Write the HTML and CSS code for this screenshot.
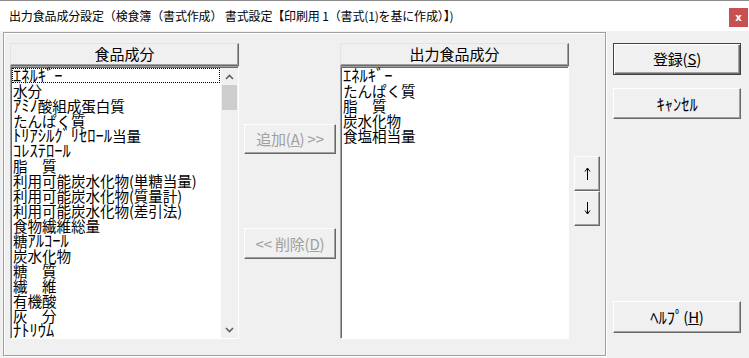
FILE: index.html
```html
<!DOCTYPE html>
<html lang="ja">
<head>
<meta charset="utf-8">
<title>出力食品成分設定</title>
<link rel="stylesheet" href="styles.css">
</head>
<body>
<div class="titlebar">
  <span class="title">出力食品成分設定（検食簿（書式作成） 書式設定【印刷用 1（書式(1)を基に作成）】)</span>
  <span class="close">x</span>
</div>
<div class="main">
  <div class="group">
    <div class="col">
      <div class="header">食品成分</div>
      <div class="list-outer">
        <div class="list">
          <div class="items">
            <div class="item focus"><span class="hk">ｴﾈﾙｷﾞｰ</span></div>
            <div class="item">水分</div>
            <div class="item"><span class="hk">ｱﾐﾉ</span>酸組成蛋白質</div>
            <div class="item">たんぱく質</div>
            <div class="item"><span class="hk">ﾄﾘｱｼﾙｸﾞﾘｾﾛｰﾙ</span>当量</div>
            <div class="item"><span class="hk">ｺﾚｽﾃﾛｰﾙ</span></div>
            <div class="item">脂　質</div>
            <div class="item">利用可能炭水化物(単糖当量)</div>
            <div class="item">利用可能炭水化物(質量計)</div>
            <div class="item">利用可能炭水化物(差引法)</div>
            <div class="item">食物繊維総量</div>
            <div class="item">糖<span class="hk">ｱﾙｺｰﾙ</span></div>
            <div class="item">炭水化物</div>
            <div class="item">糖　質</div>
            <div class="item">繊　維</div>
            <div class="item">有機酸</div>
            <div class="item">灰　分</div>
            <div class="item"><span class="hk">ﾅﾄﾘｳﾑ</span></div>
          </div>
          <div class="scrollbar">
            <div class="sb-arrow"><svg width="9" height="6" viewBox="0 0 9 6"><path d="M1 5L4.5 1.5L8 5" stroke="#606060" stroke-width="1.6" fill="none"/></svg></div>
            <div class="sb-thumb"></div>
            <div class="sb-track"></div>
            <div class="sb-arrow"><svg width="9" height="6" viewBox="0 0 9 6"><path d="M1 1L4.5 4.5L8 1" stroke="#606060" stroke-width="1.6" fill="none"/></svg></div>
          </div>
        </div>
      </div>
    </div>

    <div class="mid">
      <div class="btn disabled add">追加(<u>A</u>) &gt;&gt;</div>
      <div class="btn disabled del">&lt;&lt; 削除(<u>D</u>)</div>
    </div>

    <div class="col right">
      <div class="header">出力食品成分</div>
      <div class="list-outer">
        <div class="list">
          <div class="items">
            <div class="item"><span class="hk">ｴﾈﾙｷﾞｰ</span></div>
            <div class="item">たんぱく質</div>
            <div class="item">脂　質</div>
            <div class="item">炭水化物</div>
            <div class="item">食塩相当量</div>
          </div>
        </div>
      </div>
    </div>

    <div class="arrows">
      <div class="btn arrow up"><svg width="7" height="13" viewBox="0 0 7 13"><path d="M3.5 1.5V13M1 4.5L3.5 1L6 4.5" stroke="#000" stroke-width="1" fill="none"/></svg></div>
      <div class="btn arrow"><svg width="7" height="13" viewBox="0 0 7 13"><path d="M3.5 0V11.5M1 8.5L3.5 12L6 8.5" stroke="#000" stroke-width="1" fill="none"/></svg></div>
    </div>
  </div>

  <div class="side">
    <div class="btn default reg">登録(<u>S</u>)</div>
    <div class="btn cancel"><span class="hk">ｷｬﾝｾﾙ</span></div>
    <div class="btn help"><span class="hk">ﾍﾙﾌﾟ</span>(<u>H</u>)</div>
  </div>
</div>
</body>
</html>
```

FILE: styles.css
```css
* { box-sizing: border-box; }
html, body { margin: 0; padding: 0; }
body {
  width: 749px;
  height: 358px;
  overflow: hidden;
  background: #f0f0f0;
  color: #000;
  font-family: "Noto Sans CJK JP", "Noto Sans", sans-serif;
}
.titlebar {
  height: 31px;
  background: #fff;
  border-top: 1px solid #8c8c8c;
  display: flex;
  justify-content: space-between;
  align-items: flex-start;
  padding: 0 1px 0 9px;
}
.title {
  font-size: 12px;
  line-height: 30px;
  letter-spacing: -0.15px;
  white-space: nowrap;
}
.close {
  margin-top: 7px;
  width: 19px;
  height: 19px;
  background: #c75050;
  color: #fff;
  font: bold 10px/19px "DejaVu Sans", sans-serif;
  text-align: center;
}
.main {
  display: flex;
  align-items: flex-start;
  padding: 1px 0 0 3px;
}
.group {
  width: 603px;
  height: 324px;
  border: 1px solid #a0a0a0;
  box-shadow: inset 1px 1px 0 #fff, 1px 1px 0 #fff;
  display: flex;
  align-items: flex-start;
  padding: 10px 0 0 6px;
}
.col {
  width: 229px;
  display: flex;
  flex-direction: column;
}
.col.right { margin-left: 4px; }
.header {
  height: 23px;
  border: 1px solid;
  border-color: #e3e3e3 #696969 #696969 #e3e3e3;
  box-shadow: inset -1px -1px 0 #a0a0a0;
  font-size: 15px;
  line-height: 20px;
  text-align: center;
}
.list-outer {
  height: 273px;
  border: 1px solid;
  border-color: #a0a0a0 #fff #fff #a0a0a0;
}
.list {
  height: 100%;
  border-top: 1px solid #696969;
  border-left: 1px solid #696969;
  background: #fff;
  display: flex;
}
.items {
  flex: 1;
}
.item {
  height: 15px;
  line-height: 15px;
  font-size: 14.6px;
  padding-left: 1px;
  white-space: nowrap;
  letter-spacing: -0.1px;
}
.hk {
  font-size: 16.5px;
  letter-spacing: 0;
}
.item .hk {
  line-height: 15px;
  vertical-align: top;
}
.item.focus {
  outline: 1px dotted #000;
  outline-offset: -1px;
  margin-right: 1px;
}
.scrollbar {
  width: 17px;
  background: #f0f0f0;
  display: flex;
  flex-direction: column;
}
.sb-arrow {
  height: 17px;
  display: flex;
  align-items: center;
  justify-content: center;
}
.sb-thumb {
  height: 25px;
  margin: 0 1px;
  background: #cdcdcd;
}
.sb-track { flex: 1; }

.btn {
  background: #f0f0f0;
  border: 1px solid;
  border-color: #fff #696969 #696969 #fff;
  box-shadow: inset -1px -1px 0 #a0a0a0;
  font-size: 15px;
  line-height: 18px;
  display: flex;
  align-items: center;
  justify-content: center;
  white-space: nowrap;
  letter-spacing: -0.2px;
}
.btn u { text-underline-offset: 1px; }
.btn.disabled { color: #a0a0a0; }
.mid {
  width: 92px;
  margin-left: 5px;
  display: flex;
  flex-direction: column;
}
.add { margin-top: 81px; height: 30px; }
.del { margin-top: 74px; height: 31px; }

.arrows {
  width: 26px;
  margin-left: 5px;
  display: flex;
  flex-direction: column;
}
.arrow { height: 35px; }
.arrow.up { margin-top: 113px; }

.side {
  width: 128px;
  margin-left: 7px;
  display: flex;
  flex-direction: column;
}
.btn.default {
  border: 1px solid #404040;
  box-shadow: inset 1px 1px 0 #fff, inset -1px -1px 0 #696969, inset -2px -2px 0 #a0a0a0;
}
.reg { margin-top: 11px; height: 32px; }
.cancel { margin-top: 13px; height: 31px; }
.help { margin-top: 182px; height: 32px; }
```
